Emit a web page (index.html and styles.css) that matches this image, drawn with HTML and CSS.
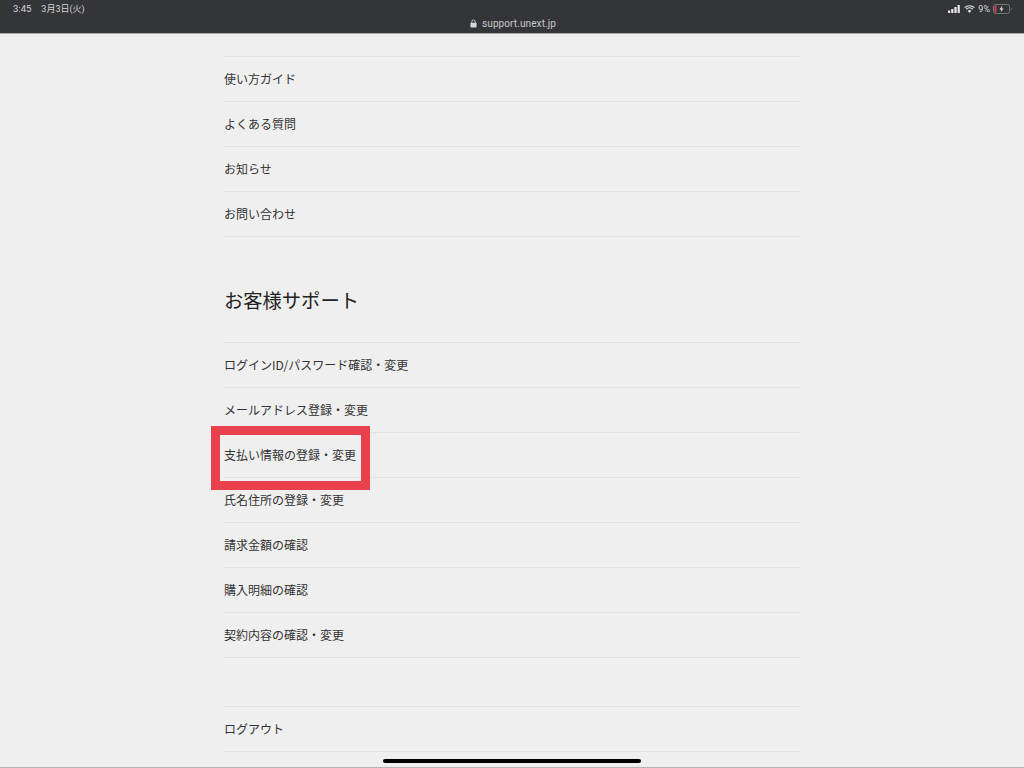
FILE: index.html
```html
<!DOCTYPE html>
<html lang="ja">
<head>
    <meta charset="UTF-8">
    <meta name="viewport" content="width=device-width, initial-scale=1.0">
    <title>support.unext.jp</title>
    <link rel="stylesheet" href="styles.css">
</head>
<body>

<!-- Status bar and address -->
<header class="top-bar">
    <div class="status-left">
        <span class="time">3:45</span>
        <span class="date">3月3日(火)</span>
    </div>
    <div class="address">
        <svg class="lock" viewBox="0 0 8 10" width="7" height="9">
            <path d="M2 4.5V3a2 2 0 0 1 4 0v1.500" fill="none" stroke="#d8d8d8" stroke-width="1"/>
            <rect x="0.500" y="4" width="7" height="5.500" rx="1" fill="#d8d8d8"/>
        </svg>
        <span>support.unext.jp</span>
    </div>
    <div class="status-right">
        <svg viewBox="0 0 13 8" width="13" height="8">
            <rect x="0" y="5.500" width="2.200" height="2.500" fill="#e8e8e8"/>
            <rect x="3.200" y="4" width="2.200" height="4" fill="#e8e8e8"/>
            <rect x="6.400" y="2" width="2.200" height="6" fill="#e8e8e8"/>
            <rect x="9.600" y="0" width="2.200" height="8" fill="#e8e8e8"/>
        </svg>
        <svg viewBox="0 0 12 9" width="11" height="8">
            <path d="M0.500 3a8 8 0 0 1 11 0M2.200 4.800a5.500 5.500 0 0 1 7.600 0" fill="none" stroke="#e8e8e8" stroke-width="1.300"/>
            <path d="M6 9L3.900 6.600a3 3 0 0 1 4.200 0z" fill="#e8e8e8"/>
        </svg>
        <span>9%</span>
        <svg viewBox="0 0 20 10" width="20" height="10">
            <rect x="0.500" y="0.500" width="16" height="9" rx="2" fill="none" stroke="#77777a"/>
            <rect x="1.500" y="1.500" width="2" height="7" fill="#d9414e"/>
            <path d="M18 3.500a1.800 1.800 0 0 1 0 3z" fill="#77777a"/>
            <path d="M9.500 1.500L6.500 5.500h2l-1 3 3-4h-2z" fill="#f2f2f2"/>
        </svg>
    </div>
</header>

<main class="content">
    <ul class="menu">
        <li><a href="#">使い方ガイド</a></li>
        <li><a href="#">よくある質問</a></li>
        <li><a href="#">お知らせ</a></li>
        <li><a href="#">お問い合わせ</a></li>
    </ul>

    <h2 class="section-title">お客様サポート</h2>

    <ul class="menu">
        <li><a href="#">ログインID/パスワード確認・変更</a></li>
        <li><a href="#">メールアドレス登録・変更</a></li>
        <li class="marked"><a href="#">支払い情報の登録・変更</a></li>
        <li><a href="#">氏名住所の登録・変更</a></li>
        <li><a href="#">請求金額の確認</a></li>
        <li><a href="#">購入明細の確認</a></li>
        <li><a href="#">契約内容の確認・変更</a></li>
    </ul>

    <ul class="menu menu-last">
        <li><a href="#">ログアウト</a></li>
    </ul>
</main>

<div class="home-indicator"></div>

</body>
</html>
```

FILE: styles.css
```css
html, body {
    height: 100%;
}

body {
    margin: 0;
    height: 768px;
    overflow: hidden;
    position: relative;
    box-sizing: border-box;
    background-color: #efefef;
    border-bottom: 1px solid #b4b4b4;
    font-family: "Noto Sans CJK JP", "Liberation Sans", sans-serif;
    color: #333;
}

.top-bar {
    height: 33px;
    box-sizing: content-box;
    background-color: #343539;
    border-bottom: 1px solid #a9a9a9;
    display: grid;
    grid-template-columns: 1fr auto 1fr;
    padding: 0 12px;
    font-family: Roboto, "Noto Sans CJK JP", sans-serif;
    font-size: 9.500px;
    color: #d6d6d6;
}

.status-left {
    display: flex;
    gap: 10px;
    padding-top: 3px;
    padding-left: 1px;
    line-height: 12px;
}

.date {
    font-size: 9px;
}

.address {
    display: flex;
    align-items: center;
    gap: 5px;
    height: 15px;
    margin-top: 16px;
    margin-left: 2px;
    font-size: 10px;
    letter-spacing: 0.1px;
    color: #c9c9c9;
}

.status-right {
    display: flex;
    justify-content: flex-end;
    align-items: center;
    gap: 3px;
    height: 12px;
    margin-top: 3px;
    margin-right: -1px;
    font-size: 9px;
    color: #d6d6d6;
}

.content {
    width: 576px;
    margin-left: 224px;
    padding-top: 22px;
}

.menu {
    list-style: none;
    margin: 0;
    padding: 0;
    border-top: 1px solid #e3e3e3;
}

.menu li {
    height: 44px;
    border-bottom: 1px solid #e3e3e3;
    position: relative;
}

.menu a {
    display: block;
    font-size: 12px;
    line-height: 44px;
    color: #333;
    text-decoration: none;
}

.section-title {
    margin: 0;
    height: 105px;
    font-size: 19.300px;
    font-weight: 400;
    line-height: 126px;
    color: #222;
}

.menu-last {
    margin-top: 48px;
}

/* red box drawn over the screenshot */
.marked::after {
    content: "";
    position: absolute;
    left: -13px;
    top: -7px;
    width: 141px;
    height: 46px;
    border: 9px solid #e9404e;
}

.home-indicator {
    position: absolute;
    left: 383px;
    bottom: 4px;
    width: 258px;
    height: 4px;
    border-radius: 2px;
    background-color: #000;
}
```
